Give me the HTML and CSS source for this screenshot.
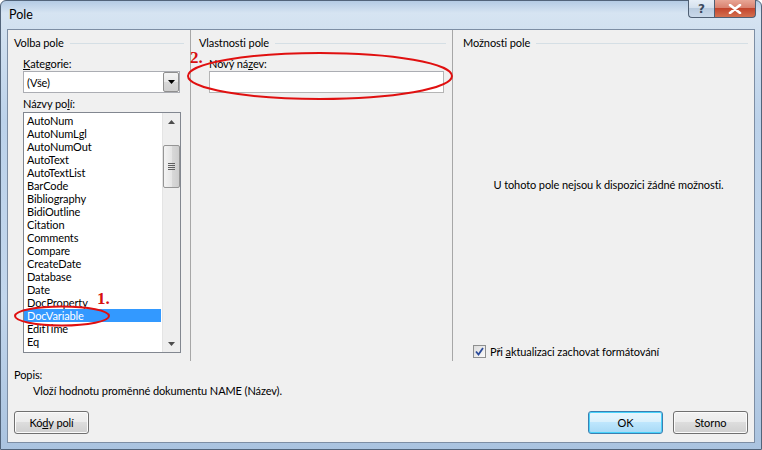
FILE: index.html
```html
<!DOCTYPE html>
<html lang="cs">
<head>
<meta charset="utf-8">
<title>Pole</title>
<link rel="stylesheet" href="styles.css">
</head>
<body>
<div class="window">
  <div class="titlebar">
    <span class="title">Pole</span>
    <div class="caption">
      <div class="cbtn help">?</div>
      <div class="cbtn close">
        <svg width="14" height="10" viewBox="0 0 14 10"><path d="M2 1 L12 9 M12 1 L2 9" stroke="#ffffff" stroke-width="2.6" stroke-linecap="round"/></svg>
      </div>
    </div>
  </div>
  <div class="client">
    <div class="panels">
      <section class="panel p-left">
        <div class="group-head"><span>Volba pole</span><i></i></div>
        <div class="indent-left">
          <div class="label lbl-kat"><u>K</u>ategorie:</div>
          <div class="combo">
            <span class="combo-text">(Vše)</span>
            <div class="combo-btn"><svg width="7" height="4" viewBox="0 0 7 4"><path d="M0 0 H7 L3.5 4 Z" fill="#000"/></svg></div>
          </div>
          <div class="label lbl-names">Názvy po<u>l</u>í:</div>
          <div class="listbox">
            <ul class="items">
              <li>AutoNum</li>
              <li>AutoNumLgl</li>
              <li>AutoNumOut</li>
              <li>AutoText</li>
              <li>AutoTextList</li>
              <li>BarCode</li>
              <li>Bibliography</li>
              <li>BidiOutline</li>
              <li>Citation</li>
              <li>Comments</li>
              <li>Compare</li>
              <li>CreateDate</li>
              <li>Database</li>
              <li>Date</li>
              <li>DocProperty</li>
              <li class="selected">DocVariable</li>
              <li>EditTime</li>
              <li>Eq</li>
            </ul>
            <div class="vscroll">
              <div class="sarrow"><svg width="7" height="4" viewBox="0 0 7 4"><path d="M0 4 H7 L3.5 0 Z" fill="#4d4d4d"/></svg></div>
              <div class="thumb"><span class="grip"></span></div>
              <div class="track"></div>
              <div class="sarrow"><svg width="7" height="4" viewBox="0 0 7 4"><path d="M0 0 H7 L3.5 4 Z" fill="#4d4d4d"/></svg></div>
            </div>
          </div>
        </div>
      </section>
      <section class="panel p-mid">
        <div class="group-head"><span>Vlastnosti pole</span><i></i></div>
        <div class="indent-mid">
          <div class="label lbl-kat">Nový ná<u>z</u>ev:</div>
          <div class="textbox"></div>
        </div>
      </section>
      <section class="panel p-right">
        <div class="group-head"><span>Možnosti pole</span><i></i></div>
        <div class="no-options">U tohoto pole nejsou k dispozici žádné možnosti.</div>
        <label class="check-row">
          <span class="checkbox"><svg width="9" height="9" viewBox="0 0 9 9"><path d="M1 4.5 L3.5 7.5 L8 1" fill="none" stroke="#2a4a9a" stroke-width="1.8"/></svg></span>
          <span>Při <u>a</u>ktualizaci zachovat formátování</span>
        </label>
      </section>
    </div>
    <div class="desc">
      <div class="desc-title">Popis:</div>
      <div class="desc-text">Vloží hodnotu proměnné dokumentu NAME (Název).</div>
    </div>
    <div class="buttons">
      <button class="btn">Kó<u>d</u>y polí</button>
      <span class="spacer"></span>
      <button class="btn default">OK</button>
      <button class="btn">Storno</button>
    </div>
  </div>
  <svg class="annot" width="762" height="450" viewBox="0 0 762 450">
    <ellipse cx="62" cy="316" rx="47" ry="9.5" fill="none" stroke="#e01010" stroke-width="2"/>
    <ellipse cx="320" cy="76" rx="132" ry="23" fill="none" stroke="#e01010" stroke-width="2"/>
  </svg>
  <div class="mark mark1">1.</div>
  <div class="mark mark2">2.</div>
</div>
</body>
</html>
```
FILE: styles.css
```css
html, body {
  margin: 0;
  padding: 0;
}
body {
  width: 762px;
  height: 450px;
  overflow: hidden;
  font-family: "Segoe UI", Lato, "Noto Sans", sans-serif;
  font-size: 11px;
  letter-spacing: -0.1px;
  color: #000;
}
.window {
  position: relative;
  width: 762px;
  height: 450px;
  box-sizing: border-box;
  border: 1px solid #52647a;
  border-radius: 6px 6px 0 0;
  background: linear-gradient(180deg, #b4cbe4 0px, #d6e4f2 12px, #d2e1f0 28px, #bcd2ea 120px, #c2d6ec 300px, #aac3df 450px);
  display: flex;
  flex-direction: column;
}
.titlebar {
  height: 28px;
  display: flex;
  align-items: flex-start;
  flex: none;
}
.title {
  padding-left: 8px;
  line-height: 27px;
  font-size: 12.5px;
  letter-spacing: 0;
  color: #000;
}
.caption {
  margin-left: auto;
  margin-right: 5px;
  margin-top: -1px;
  display: flex;
}
.cbtn {
  height: 18px;
  box-sizing: border-box;
  border: 1px solid #4f5f73;
  border-top: none;
  display: flex;
  align-items: center;
  justify-content: center;
}
.help {
  width: 26px;
  border-right: none;
  border-radius: 0 0 0 4px;
  background: linear-gradient(180deg, #e6eef7 0%, #d5e1ee 45%, #b9cbdf 50%, #cad9ea 100%);
  color: #3b4a5e;
  font-weight: bold;
  font-size: 12px;
  font-family: "DejaVu Sans", sans-serif;
  line-height: 1;
}
.close {
  width: 42px;
  border-radius: 0 0 4px 0;
  background: linear-gradient(180deg, #e8a696 0%, #d98270 45%, #c3452d 50%, #d4704f 100%);
}
.client {
  margin: 0 6px 0 6px;
  width: 748px;
  height: 414px;
  box-sizing: border-box;
  border: 1px solid #7d8ea4;
  background: #f0f0f0;
  display: flex;
  flex-direction: column;
  flex: none;
}
.panels {
  height: 331px;
  display: flex;
  flex: none;
}
.panel {
  box-sizing: border-box;
  display: flex;
  flex-direction: column;
}
.p-left {
  width: 183px;
  padding-left: 6px;
  border-right: 1px solid #a7a7a7;
}
.p-mid {
  width: 262px;
  padding-left: 8px;
  border-right: 1px solid #a7a7a7;
}
.p-right {
  flex: 1;
  padding-left: 10px;
}
.group-head {
  margin-top: 5px;
  height: 15px;
  line-height: 15px;
  display: flex;
  align-items: center;
  gap: 6px;
  padding-right: 6px;
}
.group-head i {
  flex: 1;
  height: 1px;
  background: #d5dfe5;
  margin-top: 1px;
}
.label {
  height: 15px;
  line-height: 15px;
}
.lbl-kat {
  margin-top: 6px;
}
.lbl-names {
  margin-top: 3px;
}
.indent-left {
  padding-left: 9px;
  display: flex;
  flex-direction: column;
}
.indent-mid {
  padding-left: 10px;
  display: flex;
  flex-direction: column;
}
.combo {
  width: 157px;
  height: 22px;
  box-sizing: border-box;
  border: 1px solid #abadb3;
  background: #fff;
  display: flex;
  align-items: center;
}
.combo-text {
  padding-left: 3px;
  flex: 1;
}
.combo-btn {
  width: 16px;
  height: 20px;
  box-sizing: border-box;
  border: 1px solid #8f8f8f;
  border-radius: 2px;
  background: linear-gradient(180deg, #f4f4f4 0%, #e8e8e8 50%, #d8d8d8 51%, #cfcfcf 100%);
  display: flex;
  align-items: center;
  justify-content: center;
}
.listbox {
  margin-top: 1px;
  width: 158px;
  height: 241px;
  box-sizing: border-box;
  border: 1px solid #828790;
  background: #fff;
  display: flex;
}
.items {
  list-style: none;
  margin: 0;
  padding: 1px 1px 0 0;
  flex: 1;
  overflow: hidden;
}
.items li {
  height: 13px;
  line-height: 13px;
  padding-left: 3px;
  white-space: nowrap;
}
.items li.selected {
  background: #3399ff;
  color: #fff;
}
.vscroll {
  width: 17px;
  background: #eeeeee;
  border-left: 1px solid #e4e4e4;
  display: flex;
  flex-direction: column;
}
.sarrow {
  height: 17px;
  display: flex;
  align-items: center;
  justify-content: center;
}
.thumb {
  margin-top: 15px;
  height: 43px;
  box-sizing: border-box;
  border: 1px solid #959595;
  border-radius: 2px;
  background: linear-gradient(90deg, #f3f3f3 0%, #e6e6e6 50%, #d9d9d9 51%, #cdcdcd 100%);
  display: flex;
  align-items: center;
  justify-content: center;
}
.grip {
  width: 7px;
  height: 7px;
  background: repeating-linear-gradient(180deg, #5f5f5f 0, #5f5f5f 1px, transparent 1px, transparent 2px);
}
.track {
  flex: 1;
}
.textbox {
  width: 235px;
  height: 22px;
  box-sizing: border-box;
  border: 1px solid #b5b5b5;
  border-top-color: #abadb3;
  background: #fff;
}
.no-options {
  margin-top: 127px;
  height: 15px;
  line-height: 15px;
  text-align: center;
  padding-right: 0;
}
.check-row {
  margin-top: 152px;
  margin-left: 10px;
  display: flex;
  align-items: center;
  gap: 4px;
  height: 15px;
  line-height: 15px;
}
.checkbox {
  width: 13px;
  height: 13px;
  box-sizing: border-box;
  border: 1px solid #8e8f8f;
  background: linear-gradient(135deg, #dcdcdc 0%, #fafafa 100%);
  display: flex;
  align-items: center;
  justify-content: center;
}
.desc {
  padding-left: 6px;
  margin-top: 6px;
}
.desc-title {
  height: 15px;
  line-height: 15px;
}
.desc-text {
  margin-top: 1px;
  padding-left: 19px;
  height: 15px;
  line-height: 15px;
}
.buttons {
  margin-top: 13px;
  padding: 0 6px;
  display: flex;
  gap: 10px;
}
.spacer {
  flex: 1;
}
.btn {
  width: 75px;
  height: 23px;
  box-sizing: border-box;
  border: 1px solid #707070;
  border-radius: 3px;
  background: linear-gradient(180deg, #f2f2f2 0%, #ebebeb 49%, #dddddd 50%, #cfcfcf 100%);
  box-shadow: inset 0 0 0 1px #fbfbfb;
  font-family: "Segoe UI", Lato, "Noto Sans", sans-serif;
  font-size: 11px;
  letter-spacing: -0.1px;
  color: #000;
  padding: 0;
}
.btn.default {
  border-color: #3c7fb1;
  box-shadow: inset 0 0 0 1px #48d3fb;
  background: linear-gradient(180deg, #eaf6fd 0%, #d9f0fc 49%, #bee6fd 50%, #a7d9f5 100%);
}
.annot {
  position: absolute;
  left: -1px;
  top: -1px;
  pointer-events: none;
}
.mark {
  position: absolute;
  font-family: "Liberation Serif", serif;
  font-weight: bold;
  font-size: 17px;
  line-height: 17px;
  letter-spacing: 0;
  color: #d81010;
}
.mark1 {
  left: 96px;
  top: 289px;
}
.mark2 {
  left: 189px;
  top: 48px;
}
```
